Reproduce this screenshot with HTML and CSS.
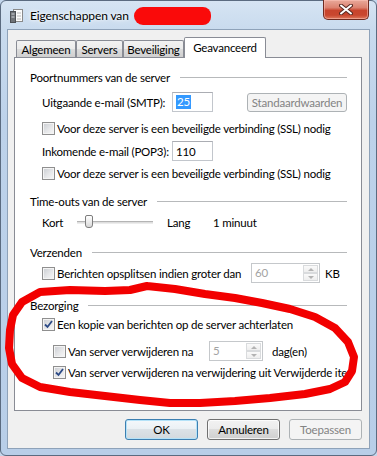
FILE: index.html
```html
<!DOCTYPE html>
<html>
<head>
<meta charset="utf-8">
<link rel="stylesheet" href="styles.css">
</head>
<body>
<div class="window">
  <div class="titlebar">
    <svg class="appicon" width="13" height="15" viewBox="0 0 13 15">
      <rect x="3.5" y="1.5" width="9" height="12" fill="#fbfbfb" stroke="#8a8a8a"/>
      <rect x="0.5" y="3.5" width="5" height="11" fill="#6f7378" stroke="#4c5055"/>
      <line x1="1.5" y1="6" x2="4.5" y2="6" stroke="#cfd3d8"/>
      <line x1="1.5" y1="9" x2="4.5" y2="9" stroke="#cfd3d8"/>
      <line x1="7" y1="5" x2="11" y2="5" stroke="#b9b9b9"/>
      <line x1="7" y1="8" x2="11" y2="8" stroke="#b9b9b9"/>
      <line x1="7" y1="11" x2="11" y2="11" stroke="#b9b9b9"/>
    </svg>
    <span class="title">Eigenschappen van</span>
    <span class="redact"></span>
    <div class="close">
      <svg width="14" height="11" viewBox="0 0 14 11">
        <path d="M2 1.5 L12 9.5 M12 1.5 L2 9.5" stroke="#5a2a22" stroke-width="4" stroke-linecap="round"/>
        <path d="M2 1.5 L12 9.5 M12 1.5 L2 9.5" stroke="#ffffff" stroke-width="2" stroke-linecap="round"/>
      </svg>
    </div>
  </div>
  <div class="client">
    <div class="tabs">
      <div class="tab t1">Algemeen</div>
      <div class="tab t2">Servers</div>
      <div class="tab t3">Beveiliging</div>
      <div class="tab t4 sel">Geavanceerd</div>
    </div>
    <div class="panel">
      <div class="group">
        <div class="gh"><span>Poortnummers van de server</span></div>
        <div class="row h30 ind">
          <span class="lbl">Uitgaande e-mail (SMTP):</span>
          <div class="tbox"><span class="selected">25</span></div>
          <div class="btn dis std">Standaardwaarden</div>
        </div>
        <div class="row h22 ind">
          <span class="cb"></span><span>Voor deze server is een beveiligde verbinding (SSL) nodig</span>
        </div>
        <div class="row h24 ind">
          <span class="lbl">Inkomende e-mail (POP3):</span>
          <div class="tbox"><span>110</span></div>
        </div>
        <div class="row h20 ind">
          <span class="cb"></span><span>Voor deze server is een beveiligde verbinding (SSL) nodig</span>
        </div>
      </div>
      <div class="group g2">
        <div class="gh"><span>Time-outs van de server</span></div>
        <div class="row h22 ind">
          <span class="kort">Kort</span>
          <div class="track"><span class="thumb"></span></div>
          <span class="lang">Lang</span>
          <span>1 minuut</span>
        </div>
      </div>
      <div class="group g3">
        <div class="gh"><span>Verzenden</span></div>
        <div class="row h22 ind">
          <span class="cb"></span><span class="split">Berichten opsplitsen indien groter dan</span>
          <div class="spin kb"><span class="val">60</span><div class="arrows"><span class="arr up"></span><span class="arr dn"></span></div></div>
          <span class="unit">KB</span>
        </div>
      </div>
      <div class="group g4">
        <div class="gh"><span>Bezorging</span></div>
        <div class="row h18 ind">
          <span class="cb on"><svg width="11" height="11" viewBox="0 0 11 11"><path d="M2 5.5 L4.5 8 L9 2" fill="none" stroke="#2c4a86" stroke-width="1.8"/></svg></span><span>Een kopie van berichten op de server achterlaten</span>
        </div>
        <div class="row h22 ind2 mt7">
          <span class="cb"></span><span class="na">Van server verwijderen na</span>
          <div class="spin days"><span class="val">5</span><div class="arrows"><span class="arr up"></span><span class="arr dn"></span></div></div>
          <span class="unit2">dag(en)</span>
        </div>
        <div class="row h20 ind2 clip">
          <span class="cb on"><svg width="11" height="11" viewBox="0 0 11 11"><path d="M2 5.5 L4.5 8 L9 2" fill="none" stroke="#2c4a86" stroke-width="1.8"/></svg></span><span>Van server verwijderen na verwijdering uit Verwijderde items</span>
        </div>
      </div>
    </div>
    <div class="buttons">
      <div class="btn def">OK</div>
      <div class="btn">Annuleren</div>
      <div class="btn dis">Toepassen</div>
    </div>
  </div>
</div>
<svg class="scribble" width="377" height="456" viewBox="0 0 377 456">
  <path d="M147 286 L175 289 L205 294 L235 298 L262 303 L290 309 L315 317 L335 328 L348 342 L354 357 L352 371 L345 382 L330 389 L305 394 L270 398 L235 401 L200 403 L170 403 L140 400 L105 396 L70 392 L40 387 L22 378 L12 364 L9 348 L10 330 L13 315 L22 302 L40 292 L70 290 L105 291 L130 290 L147 286" fill="none" stroke="#f20000" stroke-width="8" stroke-linejoin="round" stroke-linecap="round"/>
</svg>
</body>
</html>
```

FILE: styles.css
```css
* { box-sizing: border-box; }
html, body { margin: 0; padding: 0; }
body {
  width: 377px;
  height: 456px;
  overflow: hidden;
  position: relative;
  background: #c3d6ec;
  font-family: Lato, "Liberation Sans", sans-serif;
  font-size: 11.5px;
  letter-spacing: -0.2px;
  color: #000;
}
.window {
  width: 377px;
  height: 456px;
  border: 1px solid #5b6b80;
  border-radius: 6px;
  background: linear-gradient(180deg, #d6e4f3 0px, #c9dbee 28px, #bdd2ea 120px, #b8cee8 100%);
  padding: 0 6px 6px 6px;
  display: flex;
  flex-direction: column;
}
.titlebar {
  height: 28px;
  display: flex;
  align-items: center;
}
.appicon { margin-left: 3px; margin-right: 7px; }
.title {
  font-size: 12px;
  letter-spacing: -0.1px;
  color: #000;
  text-shadow: 0 0 6px #fff, 0 0 3px #fff;
}
.redact {
  width: 77px;
  height: 18px;
  margin-left: 5px;
  margin-top: 2px;
  background: #fa0a0a;
  border-radius: 10px 9px 9px 10px;
}
.close {
  margin-left: auto;
  margin-right: 1px;
  align-self: flex-start;
  margin-top: -1px;
  width: 46px;
  height: 20px;
  border: 1px solid #6e2a20;
  border-top: none;
  border-radius: 0 0 5px 5px;
  background: linear-gradient(180deg, #e9a99a 0%, #dc8270 40%, #c8442d 55%, #c9472f 80%, #de7a5e 100%);
  box-shadow: inset 0 0 0 1px rgba(255, 200, 190, 0.5);
  display: flex;
  align-items: center;
  justify-content: center;
}
.client {
  flex: 1;
  background: #f0f0f0;
  border: 1px solid #8ea2b9;
  padding: 7px 7px 8px 6px;
  display: flex;
  flex-direction: column;
}
.tabs {
  height: 20px;
  display: flex;
  align-items: flex-end;
  padding-left: 2px;
  position: relative;
  z-index: 1;
}
.tab {
  height: 17px;
  border: 1px solid #898c95;
  border-bottom: none;
  border-radius: 2px 2px 0 0;
  background: linear-gradient(180deg, #f2f2f2 0%, #ebebeb 50%, #dddddd 50%, #cfcfcf 100%);
  display: flex;
  align-items: center;
  justify-content: center;
  line-height: 15px;
}
.t1 { width: 60px; }
.t2 { width: 47px; }
.t3 { width: 61px; }
.t4 { width: 82px; }
.tab.sel {
  height: 21px;
  margin-bottom: -1px;
  background: #fff;
  padding-bottom: 2px;
}
.panel {
  height: 354px;
  background: #fff;
  border: 1px solid #898c95;
  padding: 9px 14px 0 15px;
  overflow: hidden;
}
.gh {
  height: 20px;
  display: flex;
  align-items: center;
}
.gh::after {
  content: "";
  flex: 1;
  height: 1px;
  background: #b7b9bb;
  margin-left: 10px;
}
.g2 { margin-top: 8px; }
.g3 { margin-top: 9px; }
.g4 { margin-top: 11px; }
.row {
  display: flex;
  align-items: center;
  white-space: nowrap;
}
.h30 { height: 30px; }
.h24 { height: 24px; }
.h22 { height: 22px; }
.h20 { height: 20px; }
.h18 { height: 18px; }
.mt7 { margin-top: 7px; }
.ind { padding-left: 12px; }
.ind2 { padding-left: 23px; }
.clip { overflow: hidden; margin-right: -4px; }
.lbl { width: 130px; flex: none; }
.tbox {
  width: 41px;
  height: 20px;
  border: 1px solid #c2c6cc;
  border-top-color: #abadb3;
  background: #fff;
  display: flex;
  align-items: center;
  padding-left: 3px;
}
.selected {
  background: #3399ff;
  color: #fff;
  line-height: 14px;
  padding: 0 1px;
}
.btn {
  width: 73px;
  height: 21px;
  border: 1px solid #707070;
  border-radius: 3px;
  background: linear-gradient(180deg, #f2f2f2 0%, #ebebeb 50%, #dddddd 50%, #cfcfcf 100%);
  box-shadow: inset 0 0 0 1px rgba(255, 255, 255, 0.75);
  display: flex;
  align-items: center;
  justify-content: center;
}
.btn.def {
  border-color: #3c7fb1;
  box-shadow: inset 0 0 0 1px #b4e2f8;
  background: linear-gradient(180deg, #f4f8fb 0%, #eaf0f4 50%, #dbe2e7 50%, #d2d9de 100%);
}
.btn.dis {
  border-color: #adb2b5;
  background: #f4f4f4;
  color: #838383;
  box-shadow: none;
}
.btn.std {
  width: 100px;
  height: 19px;
  margin-left: 34px;
}
.cb {
  width: 13px;
  height: 13px;
  flex: none;
  border: 1px solid #8f8f8f;
  background: linear-gradient(135deg, #c9ccd1 0%, #e6e7e9 55%, #f8f8f8 100%);
  box-shadow: inset 0 0 0 1px #f4f4f4;
  margin-right: 2px;
  display: flex;
  align-items: center;
  justify-content: center;
}
.kort { width: 35px; flex: none; }
.track {
  width: 76px;
  height: 3px;
  border-top: 1px solid #b4b4b4;
  border-bottom: 1px solid #ececec;
  background: #dedede;
  position: relative;
  margin-right: 14px;
}
.thumb {
  position: absolute;
  left: 8px;
  top: -7px;
  width: 8px;
  height: 13px;
  border: 1px solid #7d7d7d;
  border-radius: 2px 2px 3px 3px;
  background: linear-gradient(180deg, #ffffff 0%, #e9e9e9 60%, #d7d7d7 100%);
}
.lang { width: 46px; flex: none; }
.split { width: 194px; flex: none; }
.spin {
  height: 20px;
  border: 1px solid #c5c8cb;
  background: #fff;
  display: flex;
  flex: none;
}
.spin.kb { width: 69px; }
.spin.days { width: 54px; }
.val {
  flex: 1;
  color: #a3a3a3;
  padding-left: 3px;
  line-height: 18px;
}
.arrows {
  width: 16px;
  display: flex;
  flex-direction: column;
  padding: 1px 1px 1px 0;
}
.arr {
  flex: 1;
  border: 1px solid #d9dbdd;
  background: linear-gradient(180deg, #fafafa, #eeeeee);
  display: flex;
  align-items: center;
  justify-content: center;
}
.arr::after {
  content: "";
  border-left: 3px solid transparent;
  border-right: 3px solid transparent;
}
.arr.up::after { border-bottom: 3px solid #b3b3b3; }
.arr.dn::after { border-top: 3px solid #b3b3b3; }
.unit { margin-left: 5px; }
.na { width: 141px; flex: none; }
.unit2 { margin-left: 9px; }
.buttons {
  margin-top: 8px;
  height: 21px;
  display: flex;
  justify-content: flex-end;
  gap: 9px;
}
.scribble {
  position: absolute;
  left: 0;
  top: 0;
  pointer-events: none;
}
```
